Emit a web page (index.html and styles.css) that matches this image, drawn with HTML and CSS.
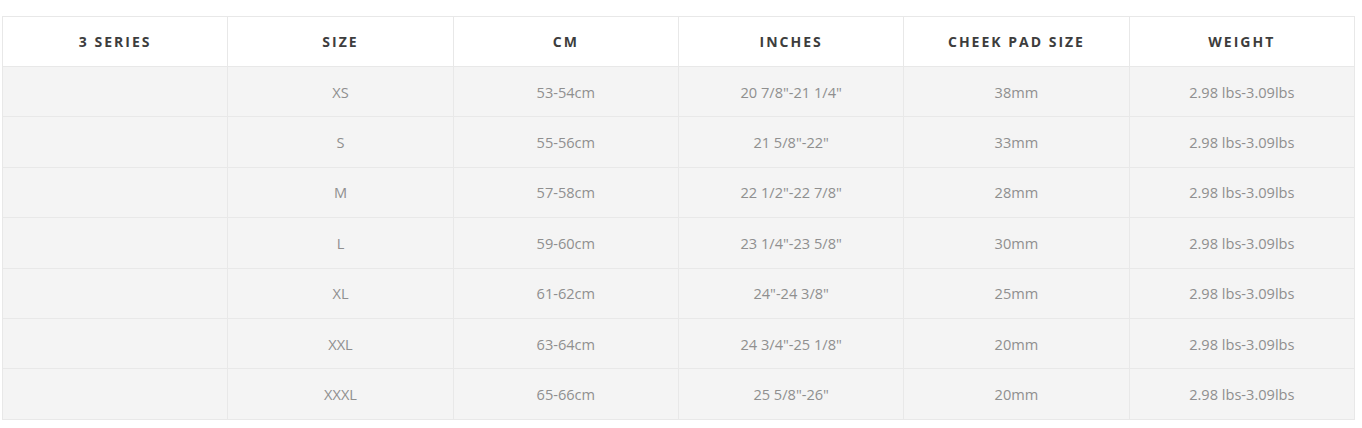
FILE: index.html
```html
<!DOCTYPE html>
<html>
<head>
<meta charset="utf-8">
<link rel="stylesheet" href="styles.css">
</head>
<body>
<div class="wrap">
<table class="size-table">
  <thead>
    <tr><th>3 SERIES</th><th>SIZE</th><th>CM</th><th>INCHES</th><th>CHEEK PAD SIZE</th><th>WEIGHT</th></tr>
  </thead>
  <tbody>
    <tr><td></td><td>XS</td><td>53-54cm</td><td>20 7/8"-21 1/4"</td><td>38mm</td><td>2.98 lbs-3.09lbs</td></tr>
    <tr><td></td><td>S</td><td>55-56cm</td><td>21 5/8"-22"</td><td>33mm</td><td>2.98 lbs-3.09lbs</td></tr>
    <tr><td></td><td>M</td><td>57-58cm</td><td>22 1/2"-22 7/8"</td><td>28mm</td><td>2.98 lbs-3.09lbs</td></tr>
    <tr><td></td><td>L</td><td>59-60cm</td><td>23 1/4"-23 5/8"</td><td>30mm</td><td>2.98 lbs-3.09lbs</td></tr>
    <tr><td></td><td>XL</td><td>61-62cm</td><td>24"-24 3/8"</td><td>25mm</td><td>2.98 lbs-3.09lbs</td></tr>
    <tr><td></td><td>XXL</td><td>63-64cm</td><td>24 3/4"-25 1/8"</td><td>20mm</td><td>2.98 lbs-3.09lbs</td></tr>
    <tr><td></td><td>XXXL</td><td>65-66cm</td><td>25 5/8"-26"</td><td>20mm</td><td>2.98 lbs-3.09lbs</td></tr>
  </tbody>
</table>
</div>
</body>
</html>
```
FILE: styles.css
```css
html, body {
  margin: 0;
  padding: 0;
  background: #ffffff;
}
body {
  font-family: "Open Sans", "Liberation Sans", sans-serif;
}
.wrap {
  padding: 16px 8px 0 2px;
}
.size-table {
  width: 1353px;
  border-collapse: collapse;
  table-layout: fixed;
}
.size-table th,
.size-table td {
  border: 1px solid #e8e8e8;
  text-align: center;
  vertical-align: middle;
  padding: 0;
}
.size-table th {
  height: 49px;
  background: #ffffff;
  color: #3d3d3d;
  font-size: 14px;
  font-weight: 700;
  letter-spacing: 2px;
}
.size-table td {
  height: 49.4px;
  background: #f4f4f4;
  color: #8f8f8f;
  font-size: 14.6px;
  font-weight: 400;
}
```
